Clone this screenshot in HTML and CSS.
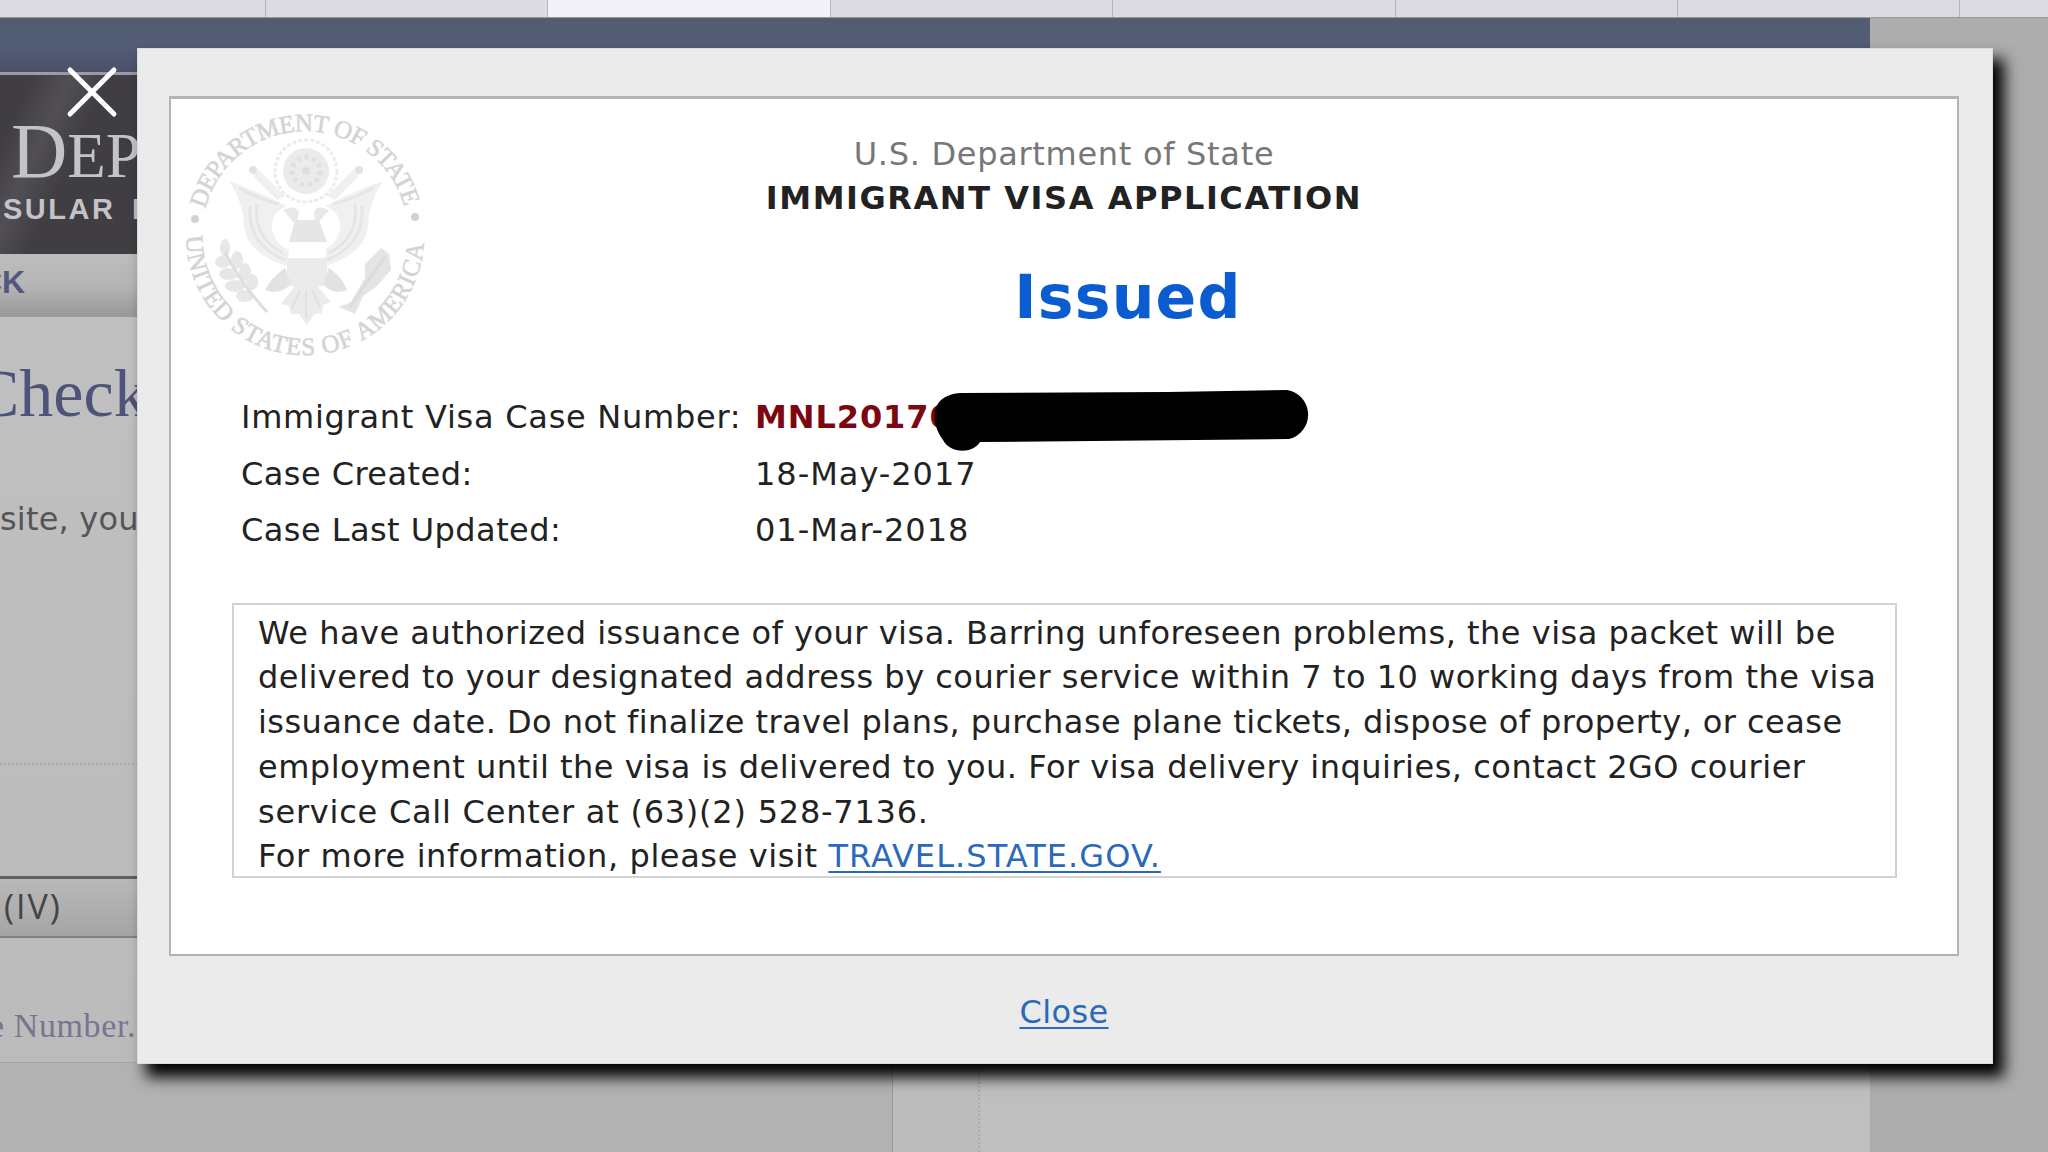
FILE: index.html
```html
<!DOCTYPE html>
<html lang="en">
<head>
    <meta charset="UTF-8">
    <title>Visa Status Check</title>
    <link rel="stylesheet" href="styles.css">
</head>
<body>

    <div class="tabs">
        <div class="tab first"></div>
        <div class="tab"></div>
        <div class="tab active"></div>
        <div class="tab"></div>
        <div class="tab"></div>
        <div class="tab"></div>
        <div class="tab"></div>
        <div class="tab last"></div>
    </div>

    <div class="page">
        <div class="topbar"></div>
        <div class="banner">
            <div class="banner-title">D<span>EP</span></div>
            <div class="banner-sub">SULAR I</div>
        </div>
        <div class="crumb">CK</div>
        <div class="content">
            <div class="check-title">Check</div>
            <div class="site-text">site, you</div>
            <div class="dots"></div>
            <div class="iv-bar">(IV)</div>
            <div class="number-text">e Number.</div>
        </div>
        <div class="bottom">
            <div class="bottom-left"></div>
            <div class="bottom-mid"></div>
            <div class="bottom-right"></div>
        </div>
    </div>

    <div class="modal">
        <div class="panel">
            <svg class="seal" width="250" height="250" viewBox="-125 -125 250 250">
                <defs>
                    <path id="top-arc" d="M-99.700 -25 A103 103 0 0 1 99.500 -27"/>
                    <path id="bottom-arc" d="M-119 2 A119 119 0 0 0 119 2"/>
                </defs>
                <g class="seal-text">
                    <text textLength="270"><textPath href="#top-arc" textLength="270">DEPARTMENT OF STATE</textPath></text>
                    <text textLength="366"><textPath href="#bottom-arc" textLength="366">UNITED STATES OF AMERICA</textPath></text>
                </g>
                <circle cx="-110" cy="-15" r="4" fill="#d2d2d2"/>
                <circle cx="110" cy="-17" r="4" fill="#d2d2d2"/>
                <!-- glory -->
                <circle cx="1" cy="-63" r="31" fill="none" stroke="#ececec" stroke-width="3" stroke-dasharray="4 2"/>
                <circle cx="1" cy="-63" r="23" fill="#ebebeb"/>
                <circle cx="1" cy="-63" r="14" fill="none" stroke="#e0e0e0" stroke-width="5" stroke-dasharray="4 4"/>
                <circle cx="1" cy="-63" r="4" fill="#dedede"/>
                <!-- wings -->
                <g id="wing">
                    <path d="M-76 -53 Q-46 -42 -18 -28 Q-34 -22 -33 -6 Q-31 10 -16 16 L-18 32 Q-58 20 -61 -8 Q-61 -30 -76 -53Z" fill="#f0f0f0"/>
                    <path d="M-55 -28 Q-58 10 -20 26 M-48 -30 Q-52 4 -22 19 M-66 -46 Q-44 -34 -26 -30" fill="none" stroke="#e5e5e5" stroke-width="3"/>
                    <path d="M-54 -66 L-46 -64 L-20 -38 L-28 -34 L-50 -56Z" fill="#f0f0f0"/>
                    <circle cx="-52" cy="-64" r="4" fill="#e2e2e2"/>
                </g>
                <use href="#wing" transform="translate(2 0) scale(-1 1)"/>
                <!-- body and shield -->
                <path d="M-22 -24 Q-10 -30 -6 -22 L-8 -12 H-12 Z M24 -24 Q12 -30 9 -22 L10 -12 H14 Z" fill="#e8e8e8"/>
                <path d="M-10 -14 H14 L22 8 H-16Z" fill="#e6e6e6"/>
                <rect x="-16" y="10" width="37" height="13" fill="#fff"/>
                <path d="M-18 24 H22 V50 Q14 54 2 54 Q-10 54 -18 50Z" fill="#ebebeb"/>
                <path d="M-20 34 Q-34 44 -40 56 Q-26 62 -14 50Z M24 34 Q38 44 42 56 Q28 62 18 50Z" fill="#e2e2e2"/>
                <path d="M-10 52 L-24 70 L-16 72 L-14 80 L-6 80 L2 91 L9 80 L17 79 L18 71 L26 68 L12 52Z" fill="#ebebeb"/>
                <path d="M-5 56 L-13 74 M1 56 V84 M7 56 L15 73" stroke="#e0e0e0" stroke-width="2"/>
                <!-- olive branch -->
                <g fill="#e7e7e7">
                    <ellipse cx="-80" cy="14" rx="5" ry="9"/>
                    <ellipse cx="-82" cy="28" rx="8" ry="6"/>
                    <ellipse cx="-68" cy="26" rx="6" ry="9"/>
                    <ellipse cx="-76" cy="40" rx="10" ry="6"/>
                    <ellipse cx="-60" cy="38" rx="6" ry="9"/>
                    <ellipse cx="-70" cy="52" rx="10" ry="6"/>
                    <ellipse cx="-53" cy="48" rx="6" ry="8"/>
                    <ellipse cx="-60" cy="62" rx="9" ry="6"/>
                </g>
                <path d="M-80 18 Q-64 50 -38 78" fill="none" stroke="#dedede" stroke-width="3"/>
                <!-- arrows -->
                <path d="M76 14 L84 20 L86 36 L72 52 L58 62 L50 80 L34 73 L46 68 L60 44 L60 30Z" fill="#e4e4e4"/>
                <path d="M80 22 L44 74" stroke="#dcdcdc" stroke-width="3"/>
            </svg>

            <div class="heading">
                <div class="dept">U.S. Department of State</div>
                <div class="app">IMMIGRANT VISA APPLICATION</div>
                <div class="status">Issued</div>
            </div>

            <div class="case">
                <div class="row"><span class="label number">Immigrant Visa Case Number:</span><span class="case-number">MNL20170</span></div>
                <div class="row"><span class="label">Case Created:</span><span class="date">18-May-2017</span></div>
                <div class="row"><span class="label">Case Last Updated:</span><span class="date">01-Mar-2018</span></div>
                <svg class="marker" width="382" height="64" viewBox="0 0 382 64">
                    <path d="M28 3 L235 2 L354 0 A25 25 0 0 1 356 49 L160 51 L47 52 C40 64 17 64 10 50 C-3 32 -4 5 28 3Z"/>
                </svg>
            </div>

            <div class="message">
                <div class="line">We have authorized issuance of your visa. Barring unforeseen problems, the visa packet will be</div>
                <div class="line">delivered to your designated address by courier service within 7 to 10 working days from the visa</div>
                <div class="line travel">issuance date. Do not finalize travel plans, purchase plane tickets, dispose of property, or cease</div>
                <div class="line">employment until the visa is delivered to you. For visa delivery inquiries, contact 2GO courier</div>
                <div class="line phone">service Call Center at (63)(2) 528-7136.</div>
                <div class="line more">For more information, please visit <a href="#">TRAVEL.STATE.GOV.</a></div>
            </div>
        </div>
        <div class="footer"><a href="#">Close</a></div>
    </div>

    <svg class="close-icon" width="52" height="52" viewBox="0 0 52 52">
        <path d="M4 4 L48 48 M48 4 L4 48"/>
    </svg>

</body>
</html>
```

FILE: styles.css
```css
* {
    box-sizing: border-box;
}

body {
    margin: 0;
    width: 2048px;
    height: 1152px;
    overflow: hidden;
    position: relative;
    background: #adadad;
    font-family: "DejaVu Sans", sans-serif;
    font-size: 32px;
    color: #222;
}

/* browser tabs */
.tabs {
    display: flex;
    height: 18px;
    background: #dcdbe1;
    border-bottom: 1px solid #999;
}

.tab {
    width: 282.400px;
    border-right: 1px solid #b4b4bc;
}

.tab.first {
    width: 266px;
}

.tab.active {
    background: #f3f2fa;
}

.tab.last {
    flex: 1;
    border: none;
}

/* page behind the dialog */
.page {
    width: 1870px;
    height: 1134px;
    background: #bfbfbf;
    white-space: nowrap;
}

.topbar {
    height: 54px;
    background: linear-gradient(#525d70, #535e76 45%, #4c5069);
}

.banner {
    height: 182px;
    border-top: 3px solid #9a9ba5;
    background: linear-gradient(115deg, #403e43 0, #403e43 30px, #514f55 65px, #403e43 100px);
    color: #c4c3c8;
    overflow: hidden;
}

.banner-title {
    font-family: "Liberation Serif", serif;
    font-size: 78px;
    line-height: 80px;
    height: 80px;
    margin: 36px 0 0 11px;
}

.banner-title span {
    font-size: 63px;
}

.banner-sub {
    font-family: "Liberation Sans", sans-serif;
    font-weight: bold;
    font-size: 29px;
    line-height: 32px;
    letter-spacing: 2.500px;
    word-spacing: 6px;
    margin: 2px 0 0 3px;
}

.crumb {
    height: 63px;
    padding-top: 10px;
    background: linear-gradient(#bdbdbd, #b5b5b5 50%, #989898);
    font-family: "Liberation Sans", sans-serif;
    font-weight: bold;
    font-size: 32px;
    line-height: 36px;
    color: #55587e;
    text-indent: -21px;
    overflow: hidden;
}

.content {
    height: 746px;
    background: linear-gradient(#c0c0c0, #bbbbbb);
    border-bottom: 1px solid #a6a6a6;
    overflow: hidden;
}

.check-title {
    font-family: "Liberation Serif", serif;
    font-size: 68px;
    line-height: 80px;
    height: 80px;
    margin: 36px 0 0 -26px;
    color: #4f5379;
}

.site-text {
    line-height: 40px;
    height: 40px;
    margin: 66px 0 0 0;
    letter-spacing: 0.200px;
    color: #555;
}

.dots {
    border-top: 2px dotted #aaa;
    margin-top: 224px;
}

.iv-bar {
    height: 62px;
    margin-top: 111px;
    padding-left: 4px;
    border-top: 3px solid #606060;
    border-bottom: 2px solid #808080;
    background: linear-gradient(#b9b9b9, #a5a5a5);
    font-family: "Open Sans", sans-serif;
    font-size: 34px;
    line-height: 54px;
    letter-spacing: 2px;
    color: #444;
}

.number-text {
    font-family: "Liberation Serif", serif;
    font-size: 34px;
    line-height: 40px;
    margin: 68px 0 0 -11px;
    color: #77758f;
    letter-spacing: 0.600px;
}

.bottom {
    display: flex;
    height: 89px;
}

.bottom-left {
    width: 893px;
    background: #b2b2b2;
    border-right: 1px solid #989898;
}

.bottom-mid {
    width: 87px;
    background: #bcbcbc;
    border-right: 2px dotted #ababab;
}

.bottom-right {
    flex: 1;
    background: #bfbfbf;
}

/* status dialog */
.modal {
    position: absolute;
    left: 137px;
    top: 48px;
    width: 1856px;
    height: 1016px;
    padding: 47px 33px 0 31px;
    background: #ebebeb;
    border: 1px solid #dcdcdc;
    box-shadow: 10px 12px 14px 1px #000;
    white-space: nowrap;
}

.panel {
    height: 860px;
    border: 2px solid #b4b4b4;
    border-top-width: 3px;
    background: #fff;
    position: relative;
}

.seal {
    position: absolute;
    left: 9px;
    top: 10px;
}

.seal-text {
    font-family: "Liberation Serif", serif;
    font-size: 25px;
    fill: #d2d2d2;
    stroke: #d8d8d8;
    stroke-width: 0.700px;
}

.heading {
    padding-top: 33px;
    text-align: center;
}

.dept {
    line-height: 44px;
    letter-spacing: 0.700px;
    color: #777;
}

.app {
    line-height: 44px;
    font-weight: bold;
    letter-spacing: 1.550px;
}

.status {
    margin-top: 42px;
    padding-left: 128px;
    font-size: 60px;
    line-height: 70px;
    font-weight: bold;
    letter-spacing: 1.200px;
    color: #0b5cd0;
}

.case {
    position: relative;
    margin: 57px 0 0 67px;
    padding: 0 0 0 3px;
}

.row {
    display: flex;
    line-height: 56.500px;
}

.label {
    width: 514px;
    letter-spacing: 0.440px;
}

.label.number {
    letter-spacing: 0.730px;
}

.case-number {
    font-weight: bold;
    letter-spacing: 0.900px;
    color: #7d0710;
}

.date {
    letter-spacing: 0.980px;
}

.marker {
    position: absolute;
    left: 695px;
    top: 1px;
}

.message {
    width: 1665px;
    height: 275px;
    margin: 44px 0 0 61px;
    padding: 6px 0 0 24px;
    border: 2px solid #d2d2d2;
}

.line {
    line-height: 44.800px;
    height: 44.800px;
    letter-spacing: 0.500px;
}

.line.travel {
    letter-spacing: 0.440px;
}

.line.phone {
    letter-spacing: 0.760px;
}

.line.more {
    letter-spacing: 0.600px;
}

a {
    color: #2a6ab8;
    text-decoration-thickness: 2px;
    text-underline-offset: 4px;
}

.line a {
    letter-spacing: 1.060px;
}

.footer {
    padding-top: 34px;
    text-align: center;
    line-height: 44px;
    letter-spacing: 0.400px;
}

.close-icon {
    position: absolute;
    left: 66px;
    top: 66px;
}

.close-icon path {
    stroke: #fff;
    stroke-width: 5;
    stroke-linecap: round;
}
```
